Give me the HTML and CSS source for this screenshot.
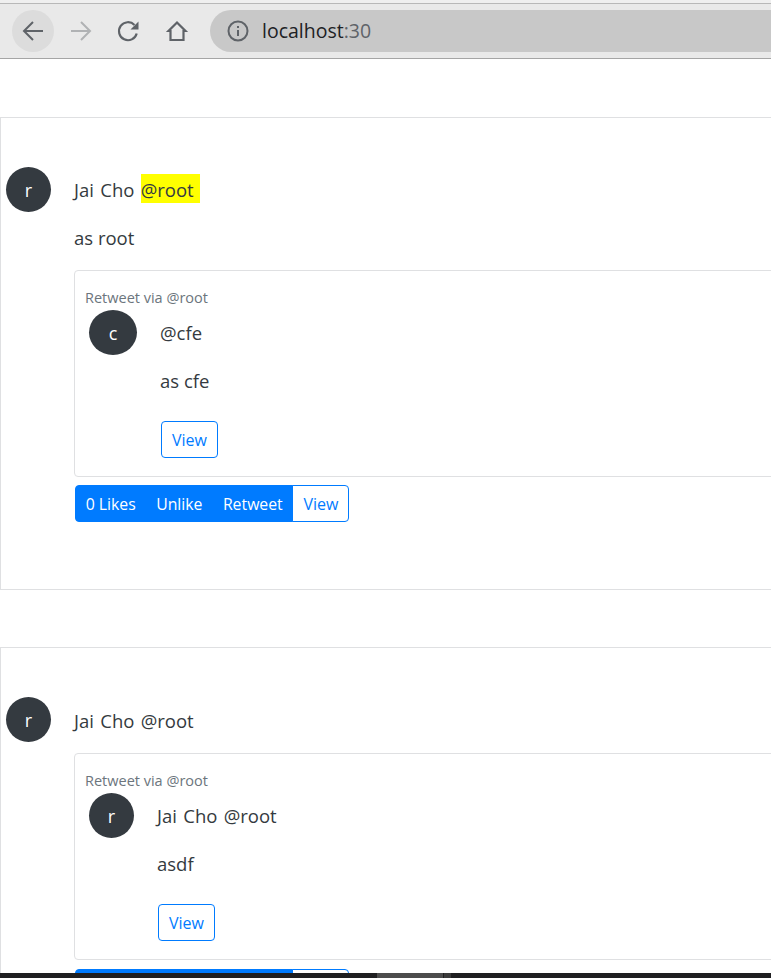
FILE: index.html
```html
<!DOCTYPE html>
<html lang="en">
<head>
    <meta charset="UTF-8">
    <meta name="viewport" content="width=device-width, initial-scale=1.0">
    <title>localhost</title>
    <link rel="stylesheet" href="styles.css">
</head>
<body>
    <div class="tabstrip"></div>
    <header class="toolbar">
        <div class="nav-btn nav-btn-active">
            <svg width="24" height="24" viewBox="0 0 24 24"><path d="M22 12H3.500M12 3l-9 9 9 9" fill="none" stroke="#5f6368" stroke-width="2"/></svg>
        </div>
        <div class="nav-btn">
            <svg width="24" height="24" viewBox="0 0 24 24"><path d="M2 12h18.500M12 3l9 9-9 9" fill="none" stroke="#b0b2b4" stroke-width="2"/></svg>
        </div>
        <div class="nav-btn">
            <svg width="24" height="24" viewBox="0 0 24 24"><path d="M19.700 14.500A9 9 0 1 1 17.500 6" fill="none" stroke="#5f6368" stroke-width="2.200"/><path d="M21.500 2.500V10.500H13.500z" fill="#5f6368"/></svg>
        </div>
        <div class="nav-btn">
            <svg width="24" height="24" viewBox="0 0 24 24"><path d="M5.500 21V12H3.500L12 3.500 20.500 12H18.500V21z" fill="none" stroke="#5f6368" stroke-width="2.200"/></svg>
        </div>
        <div class="omnibox">
            <svg width="22" height="22" viewBox="0 0 22 22"><circle cx="11" cy="11" r="9.500" fill="none" stroke="#5f6368" stroke-width="2"/><rect x="10" y="10" width="2" height="6" fill="#5f6368"/><rect x="10" y="6" width="2" height="2" fill="#5f6368"/></svg>
            <span class="url">localhost<span class="url-port">:30</span></span>
        </div>
    </header>

    <main class="feed">
        <article class="tweet">
            <div class="media">
                <div class="avatar">r</div>
                <div class="media-body">
                    <p class="line name">Jai Cho <span class="marker">@root&nbsp;</span></p>
                    <p class="line">as root</p>
                    <div class="quote">
                        <div class="quote-label">Retweet via @root</div>
                        <div class="media media-quote">
                            <div class="avatar avatar-wide">c</div>
                            <div class="media-body">
                                <p class="line">@cfe</p>
                                <p class="line">as cfe</p>
                                <a class="btn btn-outline" href="#">View</a>
                            </div>
                        </div>
                    </div>
                    <div class="btn-group">
                        <a class="btn btn-primary" href="#">0 Likes</a>
                        <a class="btn btn-primary" href="#">Unlike</a>
                        <a class="btn btn-primary" href="#">Retweet</a>
                        <a class="btn btn-outline" href="#">View</a>
                    </div>
                </div>
            </div>
        </article>

        <article class="tweet tweet-repost">
            <div class="media">
                <div class="avatar">r</div>
                <div class="media-body">
                    <p class="line name">Jai Cho @root</p>
                    <div class="quote">
                        <div class="quote-label">Retweet via @root</div>
                        <div class="media media-quote">
                            <div class="avatar">r</div>
                            <div class="media-body">
                                <p class="line name">Jai Cho @root</p>
                                <p class="line">asdf</p>
                                <a class="btn btn-outline" href="#">View</a>
                            </div>
                        </div>
                    </div>
                    <div class="btn-group">
                        <a class="btn btn-primary" href="#">0 Likes</a>
                        <a class="btn btn-primary" href="#">Unlike</a>
                        <a class="btn btn-primary" href="#">Retweet</a>
                        <a class="btn btn-outline" href="#">View</a>
                    </div>
                </div>
            </div>
        </article>
    </main>

    <div class="taskbar">
        <div class="task task-active"></div>
        <div class="task task-edge"></div>
    </div>
</body>
</html>
```

FILE: styles.css
```css
:root {
    --primary-color: #007bff;
    --border-color: #dfe0e2;
    --text-color: #343a40;
    --muted-color: #6c757d;
    --avatar-color: #343a40;
}

html, body {
    height: 978px;
    overflow: hidden;
}

body {
    margin: 0;
    padding: 0;
    background-color: #fff;
    color: var(--text-color);
    font-family: "Open Sans", "Noto Sans", sans-serif;
    font-size: 18.5px;
    line-height: 24px;
}

.tabstrip {
    height: 3px;
    background-color: #efefef;
    border-bottom: 1px solid #b8b8b8;
}

.toolbar {
    height: 54px;
    padding-left: 12px;
    display: flex;
    align-items: center;
    background-color: #e9e9e9;
    border-bottom: 1px solid #a5a5a5;
}

.nav-btn {
    width: 42px;
    height: 42px;
    margin-right: 6px;
    border-radius: 50%;
    display: flex;
    align-items: center;
    justify-content: center;
    flex-shrink: 0;
}

.nav-btn-active {
    background-color: #dcdcdc;
}

.omnibox {
    margin-left: 6px;
    width: 700px;
    height: 42px;
    flex-shrink: 0;
    padding-left: 17px;
    display: flex;
    align-items: center;
    gap: 13px;
    border-radius: 21px;
    background-color: #c8c8c8;
}

.url {
    font-size: 19.500px;
    color: #202124;
}

.url-port {
    color: #5f6368;
}

.feed {
    width: 1000px;
    padding-top: 58px;
}

.tweet {
    margin-bottom: 57px;
    height: 473px;
    padding: 49px 0 0 5px;
    box-sizing: border-box;
    border: 1px solid var(--border-color);
}

.tweet-repost > .media > .media-body {
    padding-top: 12px;
}

.tweet-repost .btn-group {
    margin-top: 9px;
}

.media {
    display: flex;
    align-items: flex-start;
}

.avatar {
    width: 45px;
    height: 45px;
    flex-shrink: 0;
    border-radius: 50%;
    display: flex;
    align-items: center;
    justify-content: center;
    background-color: var(--avatar-color);
    color: #fff;
    font-size: 18px;
}

.avatar-wide {
    width: 48px;
}

.media-body {
    flex: 1;
    margin-left: 23px;
    padding-top: 11px;
}

.line {
    margin: 0 0 24px;
}

.name {
    word-spacing: 1.500px;
}

.marker {
    padding: 3px 0 1px;
    background-color: #ffff00;
}

.quote {
    margin-top: -4px;
    padding: 16px 10px 18px;
    border: 1px solid var(--border-color);
    border-radius: 4px;
}

.quote-label {
    font-size: 14.500px;
    line-height: 22px;
    color: var(--muted-color);
}

.media-quote {
    padding-left: 4px;
    margin-top: 1px;
}

.media-quote .line:last-of-type {
    margin-bottom: 28px;
}

.media-quote .btn {
    margin-left: 1px;
}

.btn {
    display: inline-block;
    padding: 7px 10px 5px;
    border: 1px solid var(--primary-color);
    border-radius: 4px;
    font-size: 16px;
    line-height: 23px;
    text-decoration: none;
}

.btn-outline {
    color: var(--primary-color);
    background-color: #fff;
}

.btn-primary {
    padding-left: 9.700px;
    padding-right: 9.700px;
    font-size: 15.800px;
    color: #fff;
    background-color: var(--primary-color);
    border-radius: 0;
}

.btn-group {
    display: inline-flex;
    margin: 8px 0 0 1px;
}

.btn-group .btn + .btn {
    margin-left: -1px;
}

.btn-group .btn:first-child {
    border-radius: 4px 0 0 4px;
}

.btn-group .btn:last-child {
    border-radius: 0 4px 4px 0;
}

.taskbar {
    position: fixed;
    left: 0;
    right: 0;
    bottom: 0;
    height: 5px;
    padding-left: 377px;
    display: flex;
    background-color: #1f1f21;
}

.task-active {
    width: 66px;
    background-color: #4c4c4c;
}

.task-edge {
    width: 7px;
    margin-left: 1px;
    background-color: #3a3a3a;
}
```
